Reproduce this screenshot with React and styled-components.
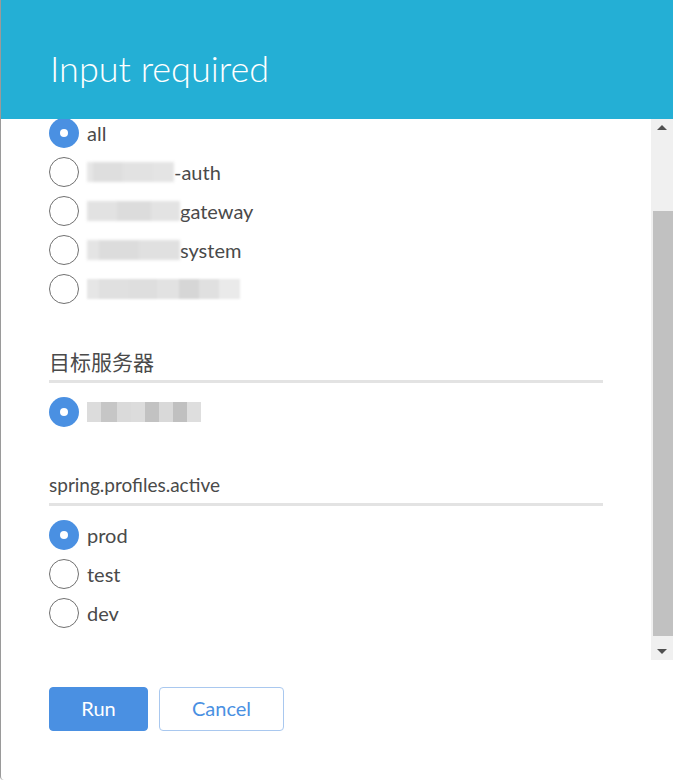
import React from "react";
import styled, { createGlobalStyle } from "styled-components";

const GlobalStyle = createGlobalStyle`
  html, body {
    margin: 0;
    padding: 0;
    background: #ffffff;
  }
  body {
    font-family: Lato, "Noto Sans", "Noto Sans CJK SC", sans-serif;
    color: #4a4a4a;
  }
`;

const Dialog = styled.div`
  width: 673px;
  height: 780px;
  display: flex;
  flex-direction: column;
  background: #fff;
  border-left: 1px solid #9a9a9a;
  border-bottom-left-radius: 4px;
  box-sizing: border-box;
  overflow: hidden;
`;

const Header = styled.div`
  height: 119px;
  flex: none;
  background: #24afd5;
  display: flex;
  align-items: center;
  padding: 17px 0 0 49px;
  box-sizing: border-box;
  position: relative;
  z-index: 1;
`;

const Title = styled.h1`
  margin: 0;
  font-family: Lato, sans-serif;
  font-weight: 300;
  font-size: 36px;
  color: #fff;
  line-height: 1;
`;

const Body = styled.div`
  height: 541px;
  flex: none;
  display: flex;
`;

const Content = styled.div`
  flex: 1;
  overflow: hidden;
  padding: 0 48px;
  margin-top: -1px;
`;

const Scrollbar = styled.div`
  width: 22px;
  flex: none;
  background: #f0f0f0;
  display: flex;
  flex-direction: column;
`;

const ArrowButton = styled.div`
  height: 17px;
  flex: none;
  display: flex;
  align-items: center;
  justify-content: center;
  &::before {
    content: "";
    width: 0;
    height: 0;
    border-left: 5px solid transparent;
    border-right: 5px solid transparent;
    ${(p) =>
      p.$down
        ? "border-top: 5px solid #505050;"
        : "border-bottom: 5px solid #505050;"}
  }
`;

const Track = styled.div`
  flex: 1;
  display: flex;
  flex-direction: column;
  padding: 75px 0 7px 2px;
`;

const Thumb = styled.div`
  flex: 1;
  background: #c1c1c1;
`;

const Section = styled.div`
  margin-top: ${(p) => p.$gap}px;
`;

const SectionTitle = styled.div`
  font-size: ${(p) => p.$size || 19}px;
  line-height: 24px;
  color: #4a4a4a;
  padding-bottom: 6px;
  border-bottom: 3px solid #e3e3e3;
  margin-bottom: 14px;
`;

const RadioList = styled.div`
  display: flex;
  flex-direction: column;
  gap: 9px;
`;

const RadioRow = styled.label`
  display: flex;
  align-items: center;
  height: 30px;
  gap: 8px;
  font-size: 20px;
  color: #4a4a4a;
`;

const RadioCircle = styled.span`
  width: 30px;
  height: 30px;
  flex: none;
  border-radius: 50%;
  box-sizing: border-box;
  display: flex;
  align-items: center;
  justify-content: center;
  ${(p) =>
    p.$checked
      ? "background: #4a90e2;"
      : "border: 1.5px solid #707070; background: #fff;"}
  &::after {
    content: "";
    width: 8px;
    height: 8px;
    border-radius: 50%;
    background: #fff;
    display: ${(p) => (p.$checked ? "block" : "none")};
  }
`;

const Label = styled.span`
  display: flex;
  align-items: center;
`;

const Redacted = styled.span`
  display: inline-flex;
  height: 20px;
  align-items: center;
  filter: blur(${(p) => p.$blur}px);
`;

const Block = styled.span`
  display: block;
  height: 20px;
  width: ${(p) => p.$w}px;
  background: ${(p) => p.$c};
`;

const Footer = styled.div`
  flex: 1;
  display: flex;
  align-items: flex-start;
  gap: 11px;
  padding: 27px 0 0 48px;
`;

const Button = styled.button`
  height: 44px;
  font-family: Lato, sans-serif;
  font-size: 20px;
  line-height: 1;
  border-radius: 4px;
  cursor: pointer;
  padding: 0 0 3px;
  width: ${(p) => p.$w}px;
  ${(p) =>
    p.$primary
      ? "background: #4a90e2; color: #fff; border: 1px solid #4a90e2;"
      : "background: #fff; color: #4a90e2; border: 1px solid #a9c8ef;"}
`;

const masks = {
  auth: [
    [6, "#e6e6e6"],
    [30, "#dedede"],
    [30, "#e2e2e2"],
    [21, "#e4e4e4"],
  ],
  gw: [
    [30, "#e2e2e2"],
    [34, "#dcdcdc"],
    [29, "#e3e3e3"],
  ],
  sys: [
    [12, "#e4e4e4"],
    [40, "#dcdcdc"],
    [41, "#e0e0e0"],
  ],
  long: [
    [12, "#e6e6e6"],
    [30, "#e0e0e0"],
    [28, "#dedede"],
    [22, "#e2e2e2"],
    [20, "#d6d6d6"],
    [20, "#e0e0e0"],
    [21, "#eaeaea"],
  ],
  server: [
    [14, "#dcdcdc"],
    [16, "#c6c6c6"],
    [14, "#dadada"],
    [14, "#dcdcdc"],
    [14, "#c2c2c2"],
    [14, "#d9d9d9"],
    [14, "#c0c0c0"],
    [14, "#dedede"],
  ],
};

const Mask = ({ name, blur = 1.5 }) => (
  <Redacted $blur={blur}>
    {masks[name].map(([w, c], i) => (
      <Block key={i} $w={w} $c={c} />
    ))}
  </Redacted>
);

const Radio = ({ checked, children }) => (
  <RadioRow>
    <RadioCircle $checked={checked} />
    <Label>{children}</Label>
  </RadioRow>
);

export default function App() {
  return (
    <>
      <GlobalStyle />
      <Dialog>
        <Header>
          <Title>Input required</Title>
        </Header>
        <Body>
          <Content>
            <RadioList>
              <Radio checked>all</Radio>
              <Radio>
                <Mask name="auth" />
                -auth
              </Radio>
              <Radio>
                <Mask name="gw" />
                gateway
              </Radio>
              <Radio>
                <Mask name="sys" />
                system
              </Radio>
              <Radio>
                <Mask name="long" blur={1} />
              </Radio>
            </RadioList>

            <Section $gap={46}>
              <SectionTitle $size={21}>目标服务器</SectionTitle>
              <RadioList>
                <Radio checked>
                  <Mask name="server" blur={0.6} />
                </Radio>
              </RadioList>
            </Section>

            <Section $gap={46}>
              <SectionTitle>spring.profiles.active</SectionTitle>
              <RadioList>
                <Radio checked>prod</Radio>
                <Radio>test</Radio>
                <Radio>dev</Radio>
              </RadioList>
            </Section>
          </Content>
          <Scrollbar>
            <ArrowButton />
            <Track>
              <Thumb />
            </Track>
            <ArrowButton $down />
          </Scrollbar>
        </Body>
        <Footer>
          <Button $primary $w={99}>
            Run
          </Button>
          <Button $w={125}>Cancel</Button>
        </Footer>
      </Dialog>
    </>
  );
}
